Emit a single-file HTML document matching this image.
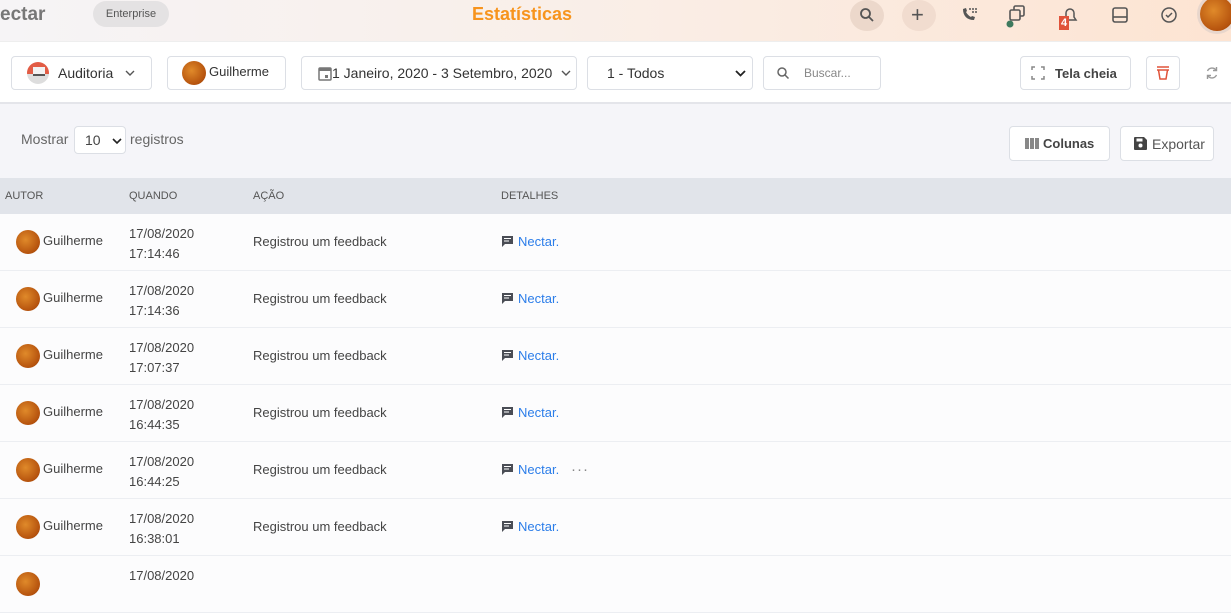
<!DOCTYPE html>
<html><head><meta charset="utf-8"><style>
*{box-sizing:border-box;margin:0;padding:0}
body{width:1231px;height:576px;overflow:hidden;font-family:"Liberation Sans",sans-serif;background:#f5f5f9;color:#444;position:relative}
.hdr{position:absolute;left:0;top:0;width:1231px;height:42px;background:linear-gradient(90deg,#f6f4f6 0%,#f9efe9 45%,#fde4d2 100%);border-bottom:1px solid #eee}
.abs{position:absolute}
.bar{position:absolute;left:0;top:42px;width:1231px;height:62px;background:#fff;border-bottom:2px solid #e4e5ea}
.btn{position:absolute;top:14px;height:34px;border:1px solid #dcdfe5;border-radius:4px;background:#fff;font-size:13px;color:#333;display:flex;align-items:center}
.av{border-radius:50%;background:radial-gradient(circle at 40% 40%,#e08a2a,#b5520d 70%,#7a3300)}
.th{position:absolute;top:178px;left:0;width:1231px;height:36px;background:#e1e4ea;font-size:11px;color:#555}
.th span,.row span{position:absolute}
.row{position:absolute;left:0;width:1231px;height:57px;background:#fcfcfd;border-bottom:1px solid #eceef2;font-size:13px;color:#444}
.nect{color:#2b7de9}
.det{left:501px;top:20px;display:flex;align-items:center}
</style></head><body>
<svg width="0" height="0" style="position:absolute"><defs><g id="chat"><path d="M1 1h11v8H4l-3 3z" fill="#4a4d55"/><path d="M3 3.5h7M3 6h5" stroke="#fff" stroke-width="1"/></g><g id="chev"><path d="M1 1l4 4 4-4" fill="none" stroke="#555" stroke-width="1.4"/></g></defs></svg>
<div class="hdr">
<div class="abs" style="left:0;top:4px;font-size:19px;font-weight:bold;color:#777">ectar</div>
<div class="abs" style="left:93px;top:1px;width:76px;height:26px;border-radius:13px;background:#e4e2e3;font-size:11px;color:#555;text-align:center;line-height:26px">Enterprise</div>
<div class="abs" style="left:472px;top:4px;font-size:18px;font-weight:bold;color:#f7941d">Estatísticas</div>
<div class="abs" style="left:850px;top:0;width:34px;height:31px;border-radius:50%;background:#ecd8cb"></div>
<svg class="abs" style="left:858px;top:6px" width="18" height="18" viewBox="0 0 18 18"><circle cx="7.5" cy="7.5" r="4.5" fill="none" stroke="#555" stroke-width="1.8"/><path d="M11 11l4 4" stroke="#555" stroke-width="1.8"/></svg>
<div class="abs" style="left:902px;top:0;width:34px;height:31px;border-radius:50%;background:#f1dccf"></div>
<div class="abs" style="left:911px;top:1px;font-size:22px;color:#555;line-height:28px">+</div>
<svg class="abs" style="left:960px;top:6px" width="18" height="18" viewBox="0 0 18 18"><path d="M3 3c0 7 4 11 11 11l1-3-3-1-1 1c-2-1-4-3-5-5l1-1-1-3z" fill="#555"/><g fill="#555"><circle cx="10" cy="3" r="1"/><circle cx="13" cy="3" r="1"/><circle cx="16" cy="3" r="1"/><circle cx="13" cy="6" r="1"/><circle cx="16" cy="6" r="1"/></g></svg>
<svg class="abs" style="left:1005px;top:4px" width="24" height="24" viewBox="0 0 24 24"><rect x="9" y="2" width="10" height="10" rx="1.5" fill="none" stroke="#555" stroke-width="1.6"/><rect x="5" y="6" width="10" height="10" rx="1.5" fill="#fbe3d4" stroke="#555" stroke-width="1.6"/><circle cx="5" cy="20" r="3.5" fill="#3e7a5e"/></svg>
<svg class="abs" style="left:1060px;top:5px" width="20" height="20" viewBox="0 0 20 20"><path d="M4 15h12l-2-3V8a4 4 0 0 0-8 0v4z" fill="none" stroke="#555" stroke-width="1.5"/></svg>
<div class="abs" style="left:1059px;top:16px;width:10px;height:14px;background:#e0533a;color:#fff;font-size:11px;font-weight:bold;text-align:center;line-height:14px">4</div>
<svg class="abs" style="left:1111px;top:6px" width="18" height="18" viewBox="0 0 18 18"><rect x="2" y="2" width="14" height="14" rx="2" fill="none" stroke="#555" stroke-width="1.6"/><path d="M2 11h14" stroke="#555" stroke-width="1.6"/></svg>
<svg class="abs" style="left:1160px;top:6px" width="18" height="18" viewBox="0 0 18 18"><circle cx="9" cy="9" r="7" fill="none" stroke="#555" stroke-width="1.5"/><path d="M6 9l2 2 4-4" fill="none" stroke="#555" stroke-width="1.5"/></svg>
<div class="abs av" style="left:1200px;top:-3px;width:34px;height:34px;box-shadow:0 0 0 3px #e8d6cc"></div>
</div>
<div class="bar">
<div class="btn" style="left:11px;width:141px"><div style="margin-left:15px;width:22px;height:22px;border-radius:50%;background:linear-gradient(#e25c45 55%,#ddd 55%);position:relative"><div style="position:absolute;left:6px;top:5px;width:12px;height:9px;background:#f2f2f2;border-bottom:2px solid #555"></div></div><span style="margin-left:9px;font-size:14px">Auditoria</span><svg style="margin-left:12px" width="10" height="7"><use href="#chev"/></svg></div>
<div class="btn" style="left:167px;width:119px"><div class="av" style="margin-left:14px;width:24px;height:24px"></div><span style="margin-left:3px;margin-top:-4px">Guilherme</span></div>
<div class="btn" style="left:301px;width:276px"><svg style="margin-left:16px" width="14" height="15" viewBox="0 0 14 15"><rect x="1" y="2" width="12" height="12" rx="1" fill="none" stroke="#777" stroke-width="1.5"/><rect x="1" y="2" width="12" height="3" fill="#777"/><rect x="7" y="9" width="3" height="3" fill="#777"/></svg><span style="font-size:14px">1 Janeiro, 2020 - 3 Setembro, 2020</span><svg style="margin-left:9px" width="10" height="7"><use href="#chev"/></svg></div>
<div class="btn" style="left:587px;width:166px"><span style="margin-left:19px;font-size:14px">1 - Todos</span><svg style="margin-left:auto;margin-right:6px" width="11" height="7"><path d="M1 1l4.5 4.5L10 1" fill="none" stroke="#222" stroke-width="1.8"/></svg></div>
<div class="btn" style="left:763px;width:118px;color:#888;font-size:12px"><svg style="margin-left:12px" width="14" height="14" viewBox="0 0 14 14"><circle cx="6" cy="6" r="4" fill="none" stroke="#666" stroke-width="1.5"/><path d="M9 9l3.5 3.5" stroke="#666" stroke-width="1.5"/></svg><span style="margin-left:14px">Buscar...</span></div>
<div class="btn" style="left:1020px;width:111px"><svg style="margin-left:10px" width="14" height="14" viewBox="0 0 14 14"><path d="M1 4V1h3M10 1h3v3M13 10v3h-3M4 13H1v-3" fill="none" stroke="#888" stroke-width="1.5"/></svg><span style="margin-left:10px;font-weight:bold;color:#444">Tela cheia</span></div>
<div class="btn" style="left:1146px;width:34px;justify-content:center"><svg width="14" height="16" viewBox="0 0 14 16"><path d="M1 2h12M1 5h12M2.5 5l1.5 9h6l1.5-9" fill="none" stroke="#e0533a" stroke-width="1.5"/></svg></div>
<svg class="abs" style="left:1205px;top:24px" width="14" height="14" viewBox="0 0 14 14"><path d="M11 4A5 5 0 0 0 2.5 5M3 10A5 5 0 0 0 11.5 9" fill="none" stroke="#999" stroke-width="1.4"/><path d="M11.5 1v3.5H8M2.5 13V9.5H6" fill="none" stroke="#999" stroke-width="1.4"/></svg>
</div>
<div class="abs" style="left:21px;top:131px;font-size:14px;color:#666">Mostrar</div>
<div class="abs" style="left:74px;top:126px;width:52px;height:28px;background:#fff;border:1px solid #dcdfe5;border-radius:4px;font-size:14px;line-height:26px;padding-left:10px;color:#444">10<svg style="position:absolute;left:37px;top:11px" width="10" height="7"><path d="M1 1l4 4 4-4" fill="none" stroke="#222" stroke-width="1.6"/></svg></div>
<div class="abs" style="left:130px;top:131px;font-size:14px;color:#666">registros</div>
<div class="abs" style="left:1009px;top:126px;width:101px;height:35px;background:#fff;border:1px solid #dcdfe5;border-radius:4px;font-size:13px;font-weight:bold;display:flex;align-items:center;padding-left:15px;color:#444"><svg width="15" height="11" viewBox="0 0 15 11"><rect x="0" y="0" width="4" height="11" fill="#888"/><rect x="5" y="0" width="4" height="11" fill="#888"/><rect x="10" y="0" width="4" height="11" fill="#888"/></svg><span style="margin-left:3px">Colunas</span></div>
<div class="abs" style="left:1120px;top:126px;width:94px;height:35px;background:#fff;border:1px solid #dcdfe5;border-radius:4px;font-size:14px;display:flex;align-items:center;padding-left:13px;color:#555"><svg width="13" height="13" viewBox="0 0 13 13"><path d="M0 1a1 1 0 0 1 1-1h9l3 3v9a1 1 0 0 1-1 1H1a1 1 0 0 1-1-1z" fill="#444"/><rect x="2.5" y="1.5" width="6" height="3" fill="#fff"/><circle cx="6.5" cy="8.5" r="2" fill="#fff"/></svg><span style="margin-left:5px">Exportar</span></div>
<div class="th"><span style="left:5px;top:12px">AUTOR</span><span style="left:129px;top:12px">QUANDO</span><span style="left:253px;top:12px">AÇÃO</span><span style="left:501px;top:12px">DETALHES</span></div>
<div class="row" style="top:214px"><div class="abs av" style="left:16px;top:16px;width:24px;height:24px"></div><span style="left:43px;top:19px">Guilherme</span><span style="left:129px;top:10px;line-height:20px">17/08/2020<br>17:14:46</span><span style="left:253px;top:20px">Registrou um feedback</span><span class="det"><svg width="14" height="13"><use href="#chat"/></svg><span class="nect" style="position:static;margin-left:3px">Nectar.</span></span></div>
<div class="row" style="top:271px"><div class="abs av" style="left:16px;top:16px;width:24px;height:24px"></div><span style="left:43px;top:19px">Guilherme</span><span style="left:129px;top:10px;line-height:20px">17/08/2020<br>17:14:36</span><span style="left:253px;top:20px">Registrou um feedback</span><span class="det"><svg width="14" height="13"><use href="#chat"/></svg><span class="nect" style="position:static;margin-left:3px">Nectar.</span></span></div>
<div class="row" style="top:328px"><div class="abs av" style="left:16px;top:16px;width:24px;height:24px"></div><span style="left:43px;top:19px">Guilherme</span><span style="left:129px;top:10px;line-height:20px">17/08/2020<br>17:07:37</span><span style="left:253px;top:20px">Registrou um feedback</span><span class="det"><svg width="14" height="13"><use href="#chat"/></svg><span class="nect" style="position:static;margin-left:3px">Nectar.</span></span></div>
<div class="row" style="top:385px"><div class="abs av" style="left:16px;top:16px;width:24px;height:24px"></div><span style="left:43px;top:19px">Guilherme</span><span style="left:129px;top:10px;line-height:20px">17/08/2020<br>16:44:35</span><span style="left:253px;top:20px">Registrou um feedback</span><span class="det"><svg width="14" height="13"><use href="#chat"/></svg><span class="nect" style="position:static;margin-left:3px">Nectar.</span></span></div>
<div class="row" style="top:442px"><div class="abs av" style="left:16px;top:16px;width:24px;height:24px"></div><span style="left:43px;top:19px">Guilherme</span><span style="left:129px;top:10px;line-height:20px">17/08/2020<br>16:44:25</span><span style="left:253px;top:20px">Registrou um feedback</span><span class="det"><svg width="14" height="13"><use href="#chat"/></svg><span class="nect" style="position:static;margin-left:3px">Nectar.</span></span><span style="left:571px;top:19px;color:#888;font-size:15px;letter-spacing:1px">···</span></div>
<div class="row" style="top:499px"><div class="abs av" style="left:16px;top:16px;width:24px;height:24px"></div><span style="left:43px;top:19px">Guilherme</span><span style="left:129px;top:10px;line-height:20px">17/08/2020<br>16:38:01</span><span style="left:253px;top:20px">Registrou um feedback</span><span class="det"><svg width="14" height="13"><use href="#chat"/></svg><span class="nect" style="position:static;margin-left:3px">Nectar.</span></span></div>
<div class="row" style="top:556px"><div class="abs av" style="left:16px;top:16px;width:24px;height:24px"></div><span style="left:129px;top:10px;line-height:20px">17/08/2020</span></div>
</body></html>
